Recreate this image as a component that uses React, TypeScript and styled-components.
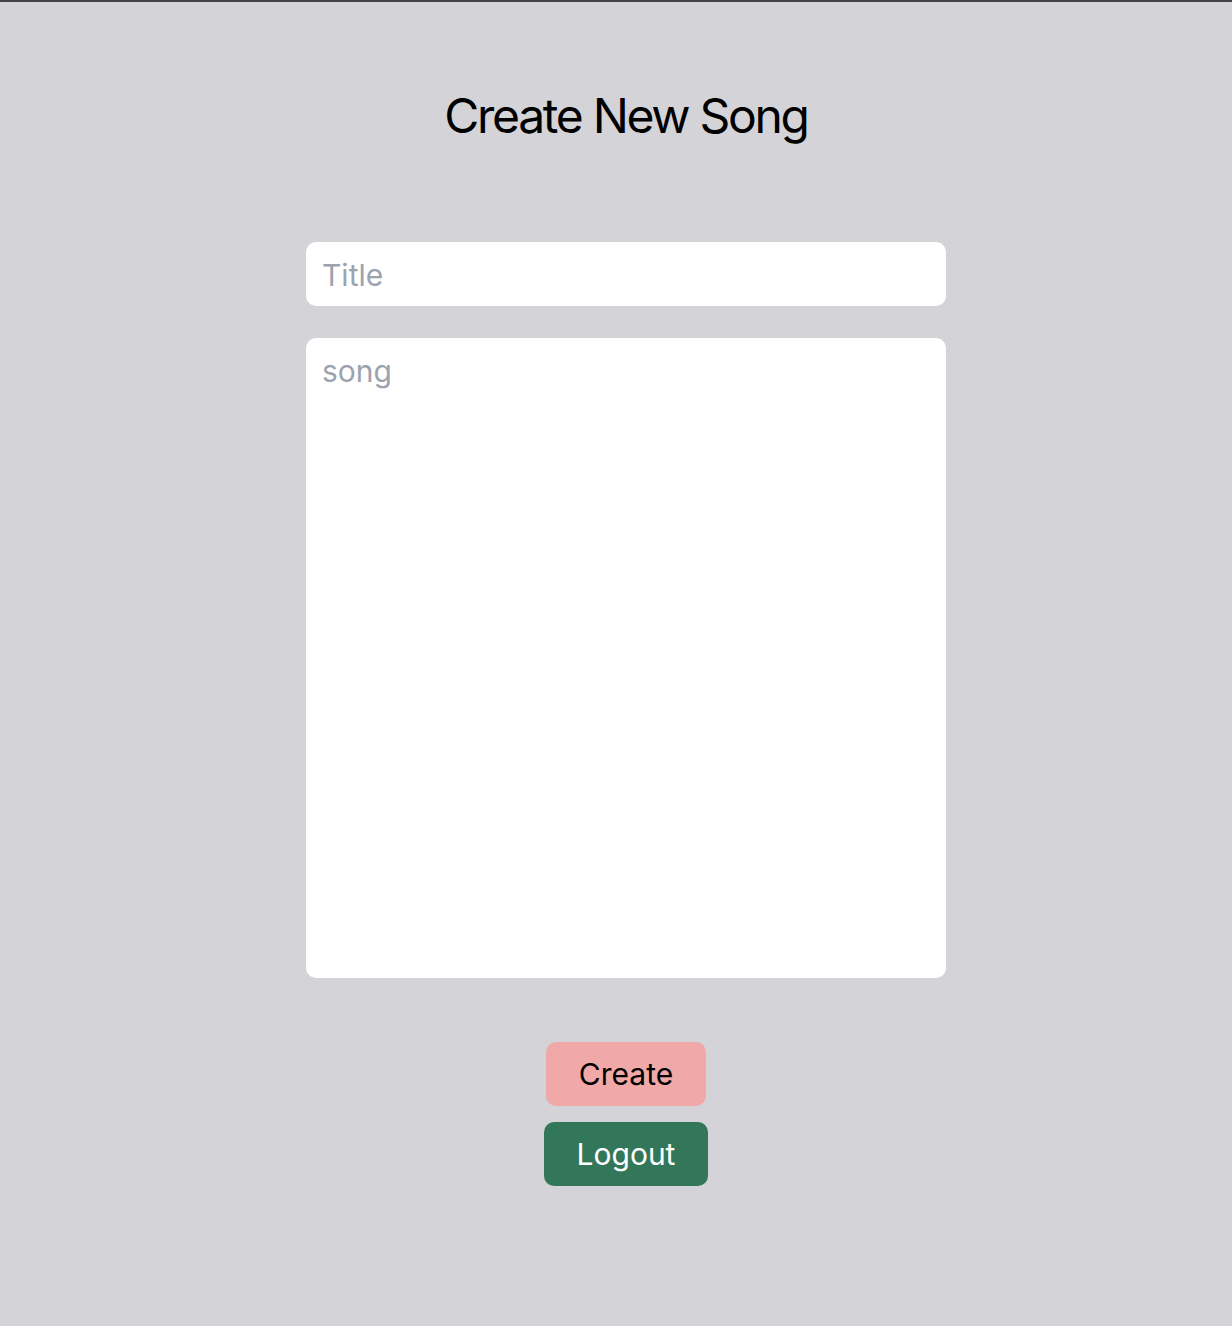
import React, { useState } from "react";
import styled, { createGlobalStyle } from "styled-components";

const GlobalStyle = createGlobalStyle`
  html, body {
    margin: 0;
    padding: 0;
    background-color: #d4d4d8;
  }
  body {
    font-family: Inter, "Noto Sans", sans-serif;
    color: #000000;
  }
  * {
    box-sizing: border-box;
  }
`;

const Page = styled.div`
  min-height: 1326px;
  border-top: 2px solid #444446;
  padding-left: 20px;
  display: flex;
  flex-direction: column;
  align-items: center;
`;

const Heading = styled.h1`
  margin: 90px 0 0;
  font-size: 48px;
  line-height: 48px;
  font-weight: 400;
  letter-spacing: -2.3px;
`;

const Form = styled.form`
  width: 640px;
  margin-top: 102px;
  display: flex;
  flex-direction: column;
  align-items: center;
  gap: 32px;
`;

const fieldText = `
  width: 100%;
  border: 0;
  outline: none;
  border-radius: 10px;
  background-color: #ffffff;
  padding: 0 16px;
  font-family: Inter, "Noto Sans", sans-serif;
  font-size: 30px;
  color: #111827;
  &::placeholder {
    color: #9ca3af;
  }
`;

const TitleInput = styled.input`
  ${fieldText}
  height: 64px;
  padding-top: 2px;
`;

const SongArea = styled.textarea`
  ${fieldText}
  height: 640px;
  padding-top: 13px;
  line-height: 40px;
  resize: none;
`;

const Actions = styled.div`
  margin-top: 32px;
  display: flex;
  flex-direction: column;
  align-items: center;
  gap: 16px;
`;

interface ButtonProps {
  $bg: string;
  $fg: string;
}

const ActionButton = styled.button<ButtonProps>`
  height: 64px;
  padding: 0 33px;
  border: 0;
  border-radius: 10px;
  background-color: ${props => props.$bg};
  color: ${props => props.$fg};
  font-family: Inter, "Noto Sans", sans-serif;
  font-size: 30px;
  cursor: pointer;
`;

const App = () => {
  const [title, setTitle] = useState("");
  const [song, setSong] = useState("");

  return (
    <>
      <GlobalStyle />
      <Page>
        <Heading>Create New Song</Heading>
        <Form onSubmit={e => e.preventDefault()}>
          <TitleInput
            placeholder="Title"
            value={title}
            onChange={e => setTitle(e.target.value)}
          />
          <SongArea
            placeholder="song"
            value={song}
            onChange={e => setSong(e.target.value)}
          />
          <Actions>
            <ActionButton type="submit" $bg="#f0a8a8" $fg="#000000">Create</ActionButton>
            <ActionButton type="button" $bg="#33775a" $fg="#ffffff">Logout</ActionButton>
          </Actions>
        </Form>
      </Page>
    </>
  );
};

export default App;
